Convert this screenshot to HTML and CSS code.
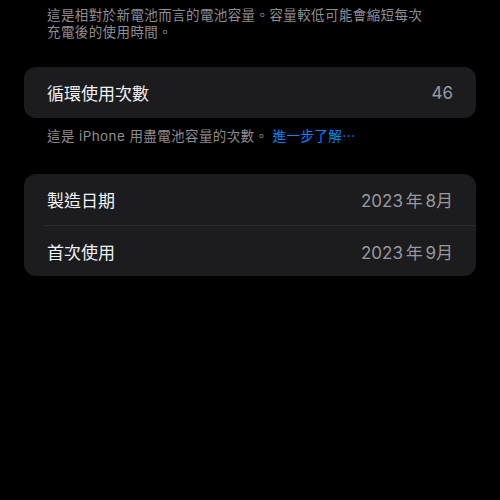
FILE: index.html
```html
<!DOCTYPE html>
<html lang="zh-Hant">
<head>
  <meta charset="UTF-8">
  <meta name="viewport" content="width=device-width, initial-scale=1.0">
  <title>電池</title>
  <link rel="stylesheet" href="styles.css">
</head>
<body>
  <div class="page">
    <p class="note note-top">這是相對於新電池而言的電池容量。容量較低可能會縮短每次<br>充電後的使用時間。</p>

    <div class="group">
      <div class="row">
        <span class="label">循環使用次數</span>
        <span class="value">46</span>
      </div>
    </div>
    <p class="note note-cycle">這是 iPhone 用盡電池容量的次數。 <a class="link" href="#">進一步了解⋯</a></p>

    <div class="group">
      <div class="row">
        <span class="label">製造日期</span>
        <span class="value">2023 年 8月</span>
      </div>
      <div class="row">
        <span class="label">首次使用</span>
        <span class="value">2023 年 9月</span>
      </div>
    </div>
  </div>
</body>
</html>
```

FILE: styles.css
```css
html,
body {
  margin: 0;
  padding: 0;
  background-color: #000;
  font-family: "Inter", "Noto Sans CJK TC", sans-serif;
}
.page {
  display: flex;
  flex-direction: column;
  padding: 7px 24px 0;
}
.note {
  margin: 0;
  padding: 0 23px;
  font-size: 13.5px;
  line-height: 17px;
  color: #8e8e93;
  letter-spacing: 0.4px;
}
.note-top {
  margin-bottom: 26px;
}
.note-cycle {
  margin: 10px 0 29px;
}
.link {
  color: #0a84ff;
  text-decoration: none;
}
.group {
  background: #1c1c1e;
  border-radius: 12px;
  overflow: hidden;
}
.row {
  display: flex;
  justify-content: space-between;
  align-items: center;
  height: 51px;
  margin-left: 20px;
  padding: 0 23px 0 3px;
  box-sizing: border-box;
  font-size: 17px;
}
.row + .row {
  border-top: 1px solid #2c2c2e;
}
.label {
  color: #f2f2f7;
}
.value {
  color: #98989e;
  word-spacing: -2px;
}
```
